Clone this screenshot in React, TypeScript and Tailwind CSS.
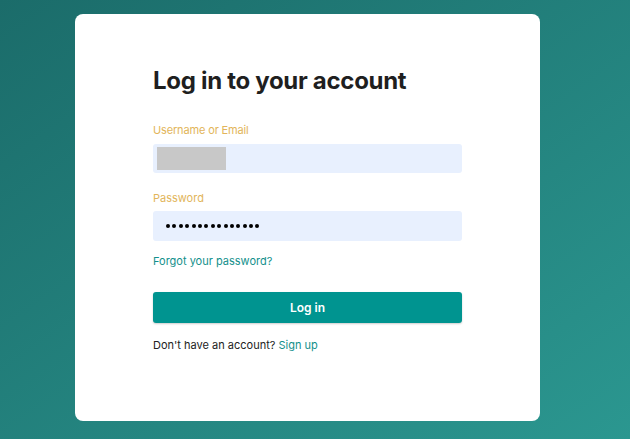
import React from "react";

export default function App() {
  return (
    <div
      className="w-[630px] h-[439px] overflow-hidden bg-gradient-to-br from-[#1b6c6a] to-[#2b9790] pt-[14px] pl-[75px]"
      style={{ fontFamily: "Inter, 'Liberation Sans', sans-serif" }}
    >
      <div className="w-[465px] h-[407px] bg-white rounded-[8px] pl-[78px] pt-[51px]">
        <h1 className="text-[24px] font-bold text-[#1f1f1f] leading-[32px] tracking-[-0.3px]">
          Log in to your account
        </h1>
        <div className="mt-[25px] text-[11px] leading-[16px] text-[#e2b55a] tracking-[-0.15px]">Username or Email</div>
        <div className="mt-[6px] w-[309px] h-[29px] rounded-[3px] bg-[#e8f0fe] p-[3px] pl-[4px]">
          <div className="w-[69px] h-[23px] bg-[#c8c8c8]" />
        </div>
        <div className="mt-[17px] text-[11px] leading-[16px] text-[#e2b55a]">Password</div>
        <div className="mt-[5px] w-[309px] h-[30px] rounded-[3px] bg-[#e8f0fe] flex items-center pl-[13px]">
          <div className="flex gap-[2.4px]">
            {Array.from({ length: 15 }).map((_, i) => (
              <span key={i} className="w-[4px] h-[4px] rounded-full bg-black" />
            ))}
          </div>
        </div>
        <div className="mt-[12px] text-[11px] leading-[16px] text-[#13908c]">Forgot your password?</div>
        <button className="mt-[23px] w-[309px] h-[31px] rounded-[3px] bg-[#009490] text-white text-[12px] font-semibold shadow-[0_1px_2px_rgba(0,0,0,0.2)]">
          Log in
        </button>
        <div className="mt-[14px] text-[11px] leading-[16px] text-[#222]">
          Don't have an account? <span className="text-[#13908c]">Sign up</span>
        </div>
      </div>
    </div>
  );
}
